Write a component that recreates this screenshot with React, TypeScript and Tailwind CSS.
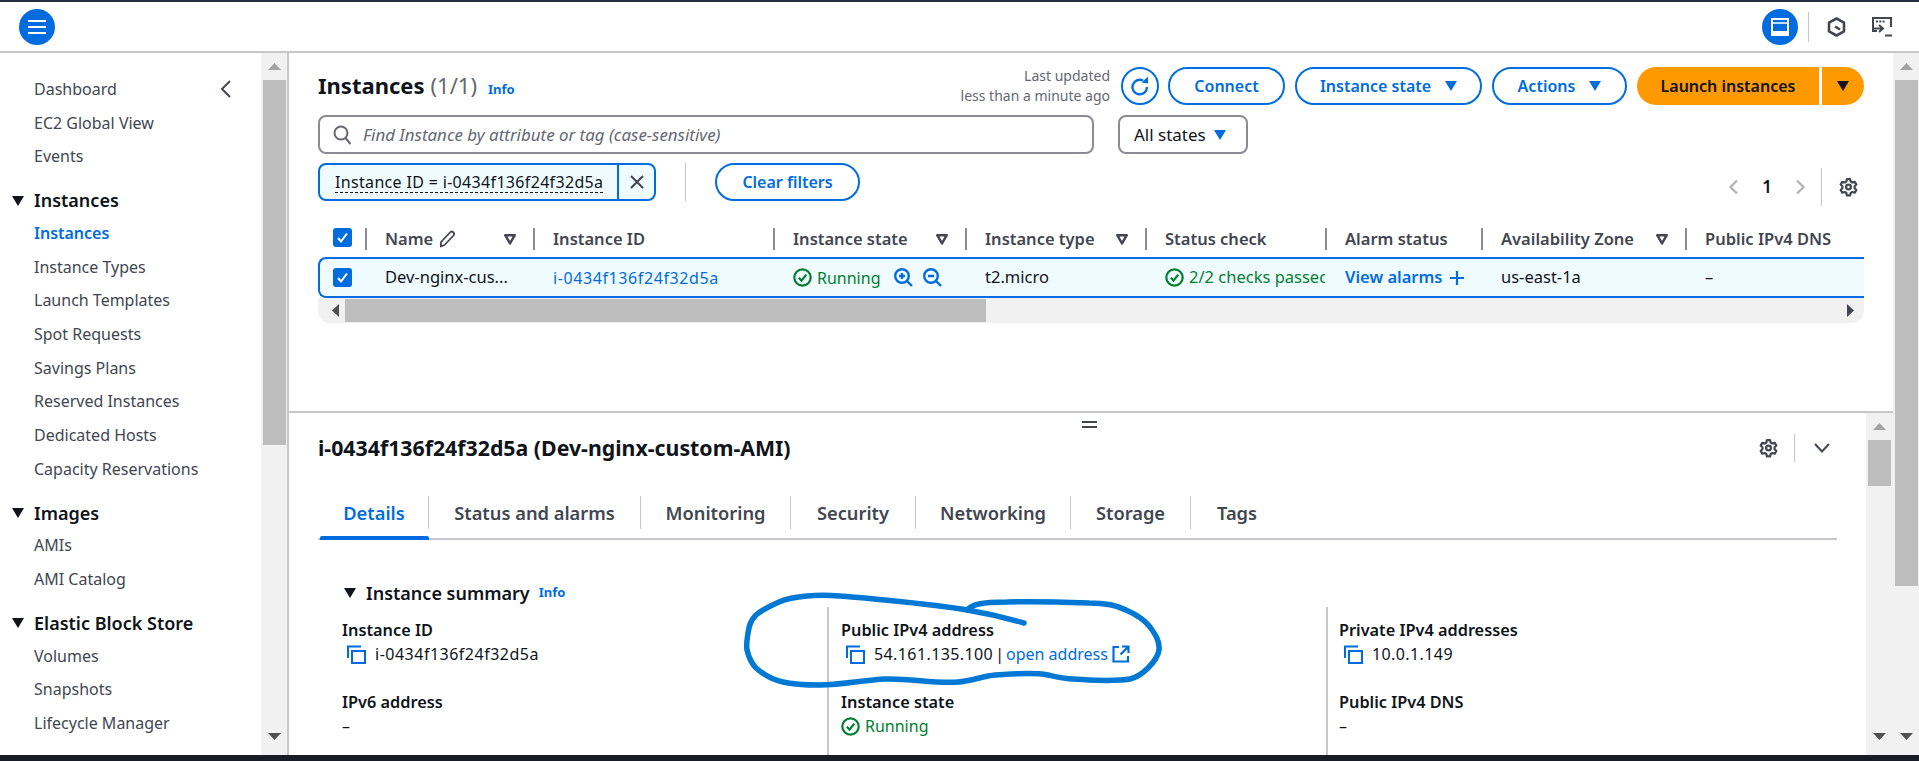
import React from "react";

const FONT = "font-['Noto_Sans',sans-serif]";

function Tri({ className = "" }: { className?: string }) {
  return (
    <svg width="12" height="10" viewBox="0 0 12 10" className={className}>
      <path d="M0 0h12L6 10z" fill="currentColor" />
    </svg>
  );
}

function FilterTri() {
  return (
    <svg width="12" height="11" viewBox="0 0 12 11" className="text-[#424650]">
      <path d="M1.2 1.2h9.6L6 9.4z" fill="none" stroke="currentColor" strokeWidth="2.4" strokeLinejoin="round" />
    </svg>
  );
}

function Scroll({ thumb, className = "" }: { thumb: string; className?: string }) {
  return (
    <div className={`flex flex-col items-center bg-[#f1f1f1] ${className}`}>
      <div className="flex h-[27px] items-center justify-center text-[#a3a3a3]">
        <svg width="13" height="7" viewBox="0 0 13 7"><path d="M6.5 0L13 7H0z" fill="currentColor" /></svg>
      </div>
      <div className={`w-[23px] bg-[#bdbdbd] ${thumb}`} />
      <div className="flex-1" />
      <div className="flex h-[22px] items-start justify-center text-[#505050]">
        <svg width="13" height="7" viewBox="0 0 13 7"><path d="M0 0h13L6.5 7z" fill="currentColor" /></svg>
      </div>
    </div>
  );
}

function Nav({ label, active }: { label: string; active?: boolean }) {
  return (
    <div className={`flex h-[33.7px] items-center pl-[34px] text-[16px] ${active ? "font-semibold text-[#006ce0]" : "text-[#424650]"}`}>
      {label}
    </div>
  );
}

function NavHead({ label }: { label: string }) {
  return (
    <div className="mt-[12px] flex h-[31px] items-center pl-[12px] text-[18px] font-semibold text-[#0f141a]">
      <Tri className="mr-[10px] text-[#0f141a]" />
      {label}
    </div>
  );
}

function Sidebar() {
  return (
    <div className="flex w-[289px] shrink-0 border-r-2 border-[#c6c6cd]">
      <div className="w-[261px] pt-[19px]">
        <div className="flex h-[33.7px] items-center justify-between pr-[28px] pl-[34px] text-[16px] text-[#424650]">
          Dashboard
          <svg width="14" height="20" viewBox="0 0 14 20" fill="none" stroke="#424650" strokeWidth="2"><path d="M11 2L3 10l8 8" /></svg>
        </div>
        <Nav label="EC2 Global View" />
        <Nav label="Events" />
        <NavHead label="Instances" />
        <Nav label="Instances" active />
        <Nav label="Instance Types" />
        <Nav label="Launch Templates" />
        <Nav label="Spot Requests" />
        <Nav label="Savings Plans" />
        <Nav label="Reserved Instances" />
        <Nav label="Dedicated Hosts" />
        <Nav label="Capacity Reservations" />
        <NavHead label="Images" />
        <Nav label="AMIs" />
        <Nav label="AMI Catalog" />
        <NavHead label="Elastic Block Store" />
        <Nav label="Volumes" />
        <Nav label="Snapshots" />
        <Nav label="Lifecycle Manager" />
      </div>
      <Scroll thumb="h-[365px]" className="w-[26px]" />
    </div>
  );
}

function Pill({ children, className = "" }: { children: React.ReactNode; className?: string }) {
  return (
    <div className={`flex h-[38px] items-center justify-center gap-[14px] rounded-full border-2 border-[#006ce0] text-[16px] font-semibold text-[#006ce0] ${className}`}>
      {children}
    </div>
  );
}

function Check() {
  return (
    <div className="flex h-[19px] w-[19px] items-center justify-center rounded-[3px] bg-[#006ce0]">
      <svg width="13" height="13" viewBox="0 0 13 13" fill="none" stroke="#fff" strokeWidth="2"><path d="M2 7l3 3.5L11 2.5" /></svg>
    </div>
  );
}

function OkIcon() {
  return (
    <svg width="19" height="19" viewBox="0 0 19 19" fill="none" stroke="#00802f" strokeWidth="2.2" className="shrink-0">
      <circle cx="9.5" cy="9.5" r="8.2" />
      <path d="M5.8 9.8l2.7 2.8 4.8-6" />
    </svg>
  );
}

function Gear() {
  return (
    <svg width="19" height="20" viewBox="0 0 24 24" fill="none" stroke="#424650" strokeWidth="2.8" strokeLinejoin="round">
      <path d="M10 2h4l.7 3 2.2 1.3 3-.9 2 3.5-2.2 2.1v2.6l2.2 2.1-2 3.5-3-.9-2.2 1.3-.7 3h-4l-.7-3-2.2-1.3-3 .9-2-3.5 2.2-2.1v-2.6L2.1 8.9l2-3.5 3 .9L9.3 5z" />
      <circle cx="12" cy="12" r="3" />
    </svg>
  );
}

function Zoom({ minus }: { minus?: boolean }) {
  return (
    <svg width="19" height="19" viewBox="0 0 19 19" fill="none" stroke="#006ce0" strokeWidth="2.4">
      <circle cx="8" cy="8" r="6.8" />
      <path d="M13 13l5 5M5 8h6" />
      {!minus && <path d="M8 5v6" />}
    </svg>
  );
}

function HeadCell({ label, w, filter, pencil }: { label: string; w: string; filter?: boolean; pencil?: boolean }) {
  return (
    <div className={`flex h-[22px] items-center justify-between border-l-2 border-[#8c8c94] pr-[17px] pl-[18px] text-[16.5px] font-semibold whitespace-nowrap text-[#424650] ${w}`}>
      <span className="flex items-center gap-[6px]">
        {label}
        {pencil && (
          <svg width="17" height="18" viewBox="0 0 17 18" fill="none" stroke="#424650" strokeWidth="1.8" strokeLinejoin="round">
            <path d="M2 12L11 2.5a2.2 2.2 0 0 1 3.5 3L5.5 15l-3.7 1.5z" />
          </svg>
        )}
      </span>
      {filter && <FilterTri />}
    </div>
  );
}

function InstancesPanel() {
  return (
    <div className="h-[360px] shrink-0 border-b-2 border-[#c6c6cd] px-[29px] pt-[14px]">
      <div className="flex h-[38px] items-center">
        <div className="mb-[2px] flex items-baseline">
          <span className="text-[22px] font-bold text-[#0f141a]">Instances</span>
          <span className="ml-[6px] text-[22px] text-[#656871]">(1/1)</span>
          <span className="ml-[11px] text-[13px] font-bold text-[#006ce0]">Info</span>
        </div>
        <div className="ml-auto flex items-center gap-[10px]">
          <div className="text-right text-[14px] leading-[20px] text-[#656871]">
            <div>Last updated</div>
            <div>less than a minute ago</div>
          </div>
          <Pill className="mr-[-1px] ml-[1px] w-[38px]">
            <svg width="22" height="22" viewBox="0 0 22 22" fill="none" stroke="#006ce0" strokeWidth="2.4">
              <path d="M18 12a7.3 7.3 0 1 1-4-6.5" />
              <path d="M12.5 7.5L19 8.5V1.5z" fill="#006ce0" stroke="none" />
            </svg>
          </Pill>
          <Pill className="w-[117px]">Connect</Pill>
          <Pill className="w-[187px]">
            Instance state
            <Tri />
          </Pill>
          <Pill className="w-[135px]">
            Actions
            <Tri />
          </Pill>
          <div className="flex h-[38px] gap-[3px] text-[16px] font-semibold text-[#0f141a]">
            <div className="flex w-[182px] items-center justify-center rounded-l-full bg-[#ff9900]">Launch instances</div>
            <div className="flex w-[42px] items-center justify-center rounded-r-full bg-[#ff9900]"><Tri /></div>
          </div>
        </div>
      </div>

      <div className="mt-[10px] flex h-[39px] gap-[24px]">
        <div className="flex w-[776px] items-center rounded-[8px] border-2 border-[#8c8c94] pl-[13px] text-[16.9px] text-[#656871] italic">
          <svg width="19" height="20" viewBox="0 0 19 20" fill="none" stroke="#656871" strokeWidth="2" className="mr-[11px]">
            <circle cx="8" cy="8" r="6.5" /><path d="M12.5 13l5 6" />
          </svg>
          Find Instance by attribute or tag (case-sensitive)
        </div>
        <div className="flex w-[130px] items-center justify-between rounded-[8px] border-2 border-[#8c8c94] pr-[20px] pl-[14px] text-[17px] text-[#0f141a]">
          All states
          <Tri className="text-[#006ce0]" />
        </div>
      </div>

      <div className="mt-[9px] flex h-[38px] items-stretch">
        <div className="flex w-[338px] rounded-[8px] border-2 border-[#006ce0] bg-[#f0fbff]">
          <div className="flex w-[299px] items-center border-r-2 border-[#006ce0] pl-[15px] text-[16px] tracking-[0.33px] text-[#0f141a]">
            <span className="border-b border-dashed border-[#0f141a] leading-[20px] whitespace-nowrap">Instance ID = i-0434f136f24f32d5a</span>
          </div>
          <div className="flex flex-1 items-center justify-center">
            <svg width="16" height="16" viewBox="0 0 16 16" stroke="#424650" strokeWidth="2"><path d="M2 2l12 12M14 2L2 14" /></svg>
          </div>
        </div>
        <div className="ml-[29px] w-[1px] bg-[#c6c6cd]" />
        <Pill className="ml-[29px] w-[145px]">Clear filters</Pill>
        <div className="mt-[5px] ml-auto flex h-[38px] items-center">
          <svg width="11" height="16" viewBox="0 0 11 16" fill="none" stroke="#b4b4bb" strokeWidth="2.4"><path d="M9 1.5L2.5 8 9 14.5" /></svg>
          <span className="mx-[22px] w-[12px] text-center text-[17px] font-semibold text-[#0f141a]">1</span>
          <svg width="11" height="16" viewBox="0 0 11 16" fill="none" stroke="#b4b4bb" strokeWidth="2.4"><path d="M2 1.5L8.5 8 2 14.5" /></svg>
          <div className="mr-[17px] ml-[15px] h-full w-[1px] bg-[#c6c6cd]" />
          <Gear />
          <div className="w-[6px]" />
        </div>
      </div>

      <div className="mt-[27px] flex h-[29px] items-start">
        <div className="w-[47px] pl-[15px]"><Check /></div>
        <HeadCell label="Name" w="w-[168px]" filter pencil />
        <HeadCell label="Instance ID" w="w-[240px]" />
        <HeadCell label="Instance state" w="w-[192px]" filter />
        <HeadCell label="Instance type" w="w-[180px]" filter />
        <HeadCell label="Status check" w="w-[180px]" />
        <HeadCell label="Alarm status" w="w-[156px]" />
        <HeadCell label="Availability Zone" w="w-[204px]" filter />
        <HeadCell label="Public IPv4 DNS" w="w-[179px]" />
      </div>

      <div className="flex h-[41px] items-center rounded-l-[8px] border-y-2 border-l-2 border-[#006ce0] bg-[#f0fbff] text-[16.5px] whitespace-nowrap text-[#0f141a]">
        <div className="w-[45px] pl-[13px]"><Check /></div>
        <div className="w-[168px] pl-[20px]">Dev-nginx-cus...</div>
        <div className="w-[240px] pl-[20px] text-[16px] tracking-[0.6px] text-[#006ce0]">i-0434f136f24f32d5a</div>
        <div className="flex w-[192px] items-center pl-[20px] text-[16px] text-[#00802f]">
          <OkIcon />
          <span className="ml-[5px]">Running</span>
          <span className="ml-[14px] flex gap-[10px]"><Zoom /><Zoom minus /></span>
        </div>
        <div className="w-[180px] pl-[20px]">t2.micro</div>
        <div className="flex w-[180px] items-center overflow-hidden pl-[20px] text-[#00802f]">
          <OkIcon />
          <span className="ml-[5px]">2/2 checks passed</span>
        </div>
        <div className="flex w-[156px] items-center gap-[6px] pl-[20px] font-semibold text-[#006ce0]">
          View alarms
          <svg width="16" height="16" viewBox="0 0 16 16" stroke="#006ce0" strokeWidth="2.2"><path d="M8 1v14M1 8h14" /></svg>
        </div>
        <div className="w-[204px] pl-[20px]">us-east-1a</div>
        <div className="pl-[20px]">–</div>
      </div>

      <div className="flex h-[25px] items-center rounded-b-[12px] bg-[#f1f1f1]">
        <div className="flex w-[27px] justify-end pr-[6px] text-[#505050]">
          <svg width="7" height="13" viewBox="0 0 7 13"><path d="M7 0v13L0 6.5z" fill="currentColor" /></svg>
        </div>
        <div className="h-[23px] w-[641px] bg-[#bdbdbd]" />
        <div className="flex flex-1 justify-end pr-[10px] text-[#424650]">
          <svg width="7" height="13" viewBox="0 0 7 13"><path d="M0 0v13l7-6.5z" fill="currentColor" /></svg>
        </div>
      </div>
    </div>
  );
}

const TABS = [
  { label: "Details", w: "w-[109px]", active: true },
  { label: "Status and alarms", w: "w-[212px]" },
  { label: "Monitoring", w: "w-[150px]" },
  { label: "Security", w: "w-[125px]" },
  { label: "Networking", w: "w-[155px]" },
  { label: "Storage", w: "w-[120px]" },
  { label: "Tags", w: "w-[92px]" },
];

function Tabs() {
  return (
    <div className="mt-[34px] ml-[29px] flex h-[44px] w-[1519px] items-start border-b-2 border-[#c6c6cd] pl-[2px]">
      {TABS.map((t) => (
        <div key={t.label} className={`relative h-[44px] shrink-0 ${t.w}`}>
          <div
            className={`flex h-[33px] items-center justify-center text-[18.3px] font-semibold whitespace-nowrap ${
              t.active ? "text-[#006ce0]" : "text-[#424650]"
            } ${t.label === "Tags" ? "" : "border-r border-[#c6c6cd]"}`}
          >
            {t.label}
          </div>
          {t.active && <div className="absolute right-0 bottom-0 left-0 h-[4px] rounded-t-[2px] bg-[#006ce0]" />}
        </div>
      ))}
    </div>
  );
}

function CopyIcon() {
  return (
    <svg width="19" height="19" viewBox="0 0 19 19" fill="none" stroke="#006ce0" strokeWidth="2" className="mr-[9px] ml-[5px] shrink-0">
      <path d="M1 13V1.5h13" />
      <rect x="5" y="6" width="13" height="12" />
    </svg>
  );
}

function Label({ children }: { children: React.ReactNode }) {
  return <div className="flex h-[22px] items-center text-[16.3px] font-semibold text-[#0f141a]">{children}</div>;
}

function Value({ children }: { children: React.ReactNode }) {
  return <div className="flex h-[26px] items-center text-[16px] whitespace-nowrap text-[#0f141a]">{children}</div>;
}

function DetailsPanel() {
  return (
    <div className="relative flex min-h-0 flex-1 overflow-hidden">
      <div className="min-w-0 flex-1">
        {/* drag handle sits on top of the panel edge */}
        <div className="absolute top-[8px] left-[793px] h-[7px] w-[15px] border-y-2 border-[#424650]" />
        <div className="mt-[21px] flex h-[28px] items-center pr-[35px] pl-[29px]">
          <span className="text-[21.3px] font-bold whitespace-nowrap text-[#0f141a]">i-0434f136f24f32d5a (Dev-nginx-custom-AMI)</span>
          <div className="ml-auto flex h-full items-center">
            <Gear />
            <div className="mr-[18px] ml-[16px] h-full w-[1px] bg-[#c6c6cd]" />
            <svg width="18" height="12" viewBox="0 0 18 12" fill="none" stroke="#424650" strokeWidth="2"><path d="M2 2l7 7.5L16 2" /></svg>
          </div>
        </div>
        <Tabs />
        <div className="mt-[41px] ml-[55px] flex h-[24px] items-center text-[18px] font-semibold text-[#0f141a]">
          <Tri className="mr-[10px]" />
          Instance summary
          <span className="ml-[9px] text-[13px] font-bold text-[#006ce0]">Info</span>
        </div>
        <div className="mt-[2px] ml-[53px] grid h-[200px] grid-cols-[485px_499px_1fr]">
          <div className="pt-[12px]">
            <Label>Instance ID</Label>
            <Value><CopyIcon /><span className="tracking-[0.5px]">i-0434f136f24f32d5a</span></Value>
            <div className="mt-[24px]"><Label>IPv6 address</Label></div>
            <Value>–</Value>
          </div>
          <div className="border-l-2 border-[#c6c6cd] pt-[12px] pl-[12px]">
            <Label>Public IPv4 address</Label>
            <Value>
              <CopyIcon />
              <span className="tracking-[0.4px]">54.161.135.100</span>
              <span className="mx-[2px]">|</span>
              <span className="text-[#006ce0]">open address</span>
              <svg width="18" height="18" viewBox="0 0 18 18" fill="none" stroke="#006ce0" strokeWidth="2.2" className="ml-[4px]">
                <path d="M7 2H1.5v14.5H16V11M10 1.5h6.5V8M16 2L8.5 9.5" />
              </svg>
            </Value>
            <div className="mt-[24px]"><Label>Instance state</Label></div>
            <Value><OkIcon /><span className="ml-[5px] text-[#00802f]">Running</span></Value>
          </div>
          <div className="border-l-2 border-[#c6c6cd] pt-[12px] pl-[11px]">
            <Label>Private IPv4 addresses</Label>
            <Value><CopyIcon /><span className="tracking-[0.4px]">10.0.1.149</span></Value>
            <div className="mt-[24px]"><Label>Public IPv4 DNS</Label></div>
            <Value>–</Value>
          </div>
        </div>
      </div>
      <Scroll thumb="h-[46px]" className="w-[27px]" />
    </div>
  );
}

// hand-drawn marker ring around the public address, drawn over the panel
function Scribble() {
  return (
    <svg width="1919" height="761" className="pointer-events-none absolute top-0 left-0" fill="none">
      <path
        d="M1024 623C1000 616 985 613 967 610C945 606 915 603 885 600C855 597 830 594 807 596C795 597 788 598 779 602C770 606 762 610 756 615C750 621 749 627 748 633C747 640 746 645 747 650C749 658 751 663 756 668C764 675 773 680 783 682C795 685 808 685 820 685C842 685 864 680 885 679C910 678 935 684 958 682C972 681 983 676 995 675C1013 674 1032 672 1048 675C1057 677 1065 679 1073 679C1092 680 1112 682 1130 679C1138 677 1143 673 1148 668C1154 662 1158 657 1159 650C1160 641 1155 634 1150 627C1144 619 1135 614 1126 610C1115 604 1102 603 1089 603C1062 602 1034 601 1007 602C996 602 987 602 979 604C974 605 970 607 967 610"
        stroke="#0078d4"
        strokeWidth="5.5"
        strokeLinecap="round"
        strokeLinejoin="round"
      />
    </svg>
  );
}

function TopBar() {
  return (
    <div className="flex h-[51px] shrink-0 items-center border-b-2 border-[#c6c6cd] pr-[27px] pl-[19px]">
      <div className="flex h-[36px] w-[36px] items-center justify-center rounded-full bg-[#006ce0]">
        <svg width="18" height="16" viewBox="0 0 18 16" stroke="#fff" strokeWidth="2.2"><path d="M0 2h18M0 8h18M0 14h18" /></svg>
      </div>
      <div className="ml-auto flex h-[36px] w-[36px] items-center justify-center rounded-full bg-[#006ce0]">
        <svg width="18" height="18" viewBox="0 0 18 18" fill="none" stroke="#fff" strokeWidth="2">
          <rect x="1" y="1" width="16" height="16" />
          <path d="M2 5h14" strokeWidth="1.5" />
          <path d="M2 14.5h14" strokeWidth="3" />
        </svg>
      </div>
      <div className="mr-[18px] ml-[10px] h-[30px] w-[1px] bg-[#c6c6cd]" />
      <svg width="19" height="20" viewBox="0 0 19 20" fill="none" stroke="#424650" strokeWidth="2.6" strokeLinejoin="round">
        <path d="M9.5 1.5l7.5 4.2v8.6l-7.5 4.2L2 14.3V5.7z" />
        <path d="M8 9.5l5 3" />
      </svg>
      <svg width="20" height="20" viewBox="0 0 20 20" fill="none" stroke="#424650" strokeWidth="2" className="ml-[26px]">
        <path d="M5 14H1V1h18v9" />
        <path d="M4 4.5h9" strokeWidth="2" strokeDasharray="2 1.3" />
        <path d="M7 8l4 3.5L7 15M1 11.5h9M13 18.5h7" />
      </svg>
    </div>
  );
}

export default function App() {
  return (
    <div className={`relative flex h-[761px] w-[1919px] flex-col overflow-hidden bg-white ${FONT}`}>
      <div className="h-[2px] shrink-0 bg-[#232f3e]" />
      <TopBar />
      <div className="flex min-h-0 flex-1">
        <Sidebar />
        <div className="flex min-w-0 flex-1 flex-col">
          <InstancesPanel />
          <DetailsPanel />
        </div>
        <Scroll thumb="h-[506px]" className="w-[26px]" />
      </div>
      <div className="h-[6px] shrink-0 bg-[#161d26]" />
      <Scribble />
    </div>
  );
}
